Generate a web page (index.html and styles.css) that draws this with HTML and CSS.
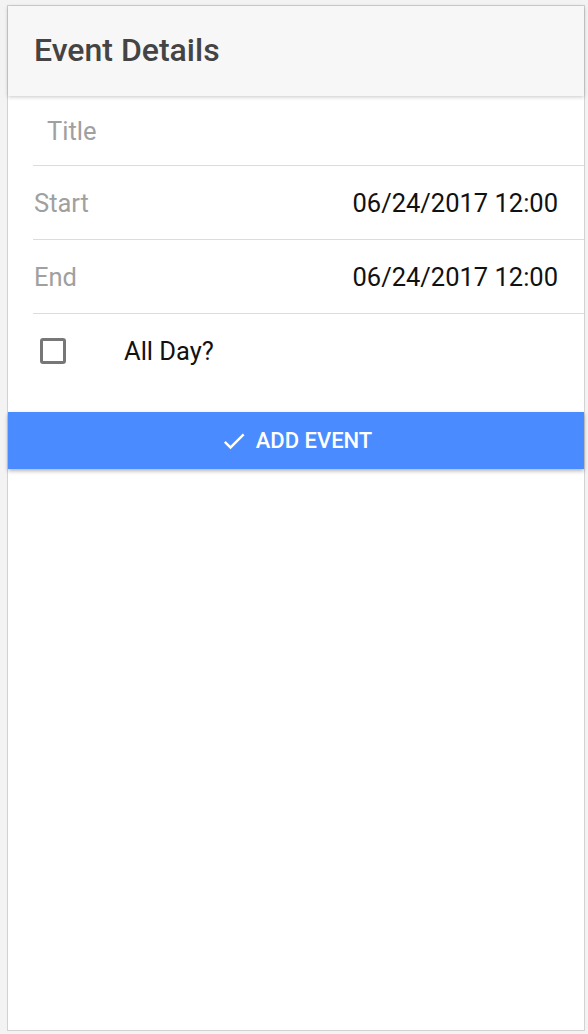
FILE: index.html
```html
<!DOCTYPE html>
<html>
<head>
<meta charset="utf-8">
<link rel="stylesheet" href="styles.css">
</head>
<body>
<div class="frame">
  <header class="bar"><h1>Event Details</h1></header>
  <div class="list">
    <div class="row title-row"><span class="placeholder">Title</span></div>
    <div class="row"><span class="label">Start</span><span class="value">06/24/2017 12:00</span></div>
    <div class="row"><span class="label">End</span><span class="value">06/24/2017 12:00</span></div>
    <div class="check-row"><span class="box"></span><span class="check-label">All Day?</span></div>
  </div>
  <button class="add">
    <svg class="icon" viewBox="0 0 24 24" width="28" height="28"><path fill="#fff" d="M9 16.17L4.83 12l-1.42 1.41L9 19 21 7l-1.41-1.41z"/></svg>
    <span>ADD EVENT</span>
  </button>
</div>
</body>
</html>
```

FILE: styles.css
```css
html, body { margin: 0; padding: 0; }
body {
  background: #f3f3f3;
  font-family: Roboto, "Liberation Sans", sans-serif;
  padding: 5px 3px 3px 7px;
  box-sizing: border-box;
  height: 1034px;
}
.frame {
  height: 1026px;
  border: 1px solid #d2d2d2;
  background: #fff;
  display: flex;
  flex-direction: column;
  box-sizing: border-box;
}
.bar {
  height: 90px;
  background: #f7f7f7;
  box-shadow: 0 1px 4px rgba(0,0,0,0.22);
  display: flex;
  align-items: center;
  padding-left: 26px;
  position: relative;
  z-index: 1;
}
.bar h1 {
  margin: 0;
  font-size: 32px;
  font-weight: 500;
  color: #444;
  padding-bottom: 2px;
}
.list { padding-left: 25px; }
.row {
  height: 73px;
  border-bottom: 1px solid #dcdcdc;
  display: flex;
  align-items: center;
  justify-content: space-between;
  padding-right: 26px;
  font-size: 25.5px;
}
.title-row { height: 69px; padding-left: 14px; }
.placeholder, .label { color: #a0a0a0; }
.label { padding-left: 1px; }
.value { color: #111; }
.check-row {
  height: 98px;
  display: flex;
  align-items: center;
  padding-left: 7px;
  padding-bottom: 24px;
  box-sizing: border-box;
}
.box {
  width: 20px;
  height: 20px;
  border: 3px solid #777;
  border-radius: 3px;
}
.check-label {
  margin-left: 58px;
  font-size: 25.5px;
  color: #111;
}
.add {
  height: 57px;
  border: none;
  background: #4a8cff;
  color: #fff;
  font-family: Roboto, "Liberation Sans", sans-serif;
  font-size: 22px;
  font-weight: 500;
  display: flex;
  align-items: center;
  justify-content: center;
  gap: 8px;
  box-shadow: 0 2px 4px rgba(0,0,0,0.3);
  padding: 0;
}
.add .icon { margin-top: 1px; }
```
